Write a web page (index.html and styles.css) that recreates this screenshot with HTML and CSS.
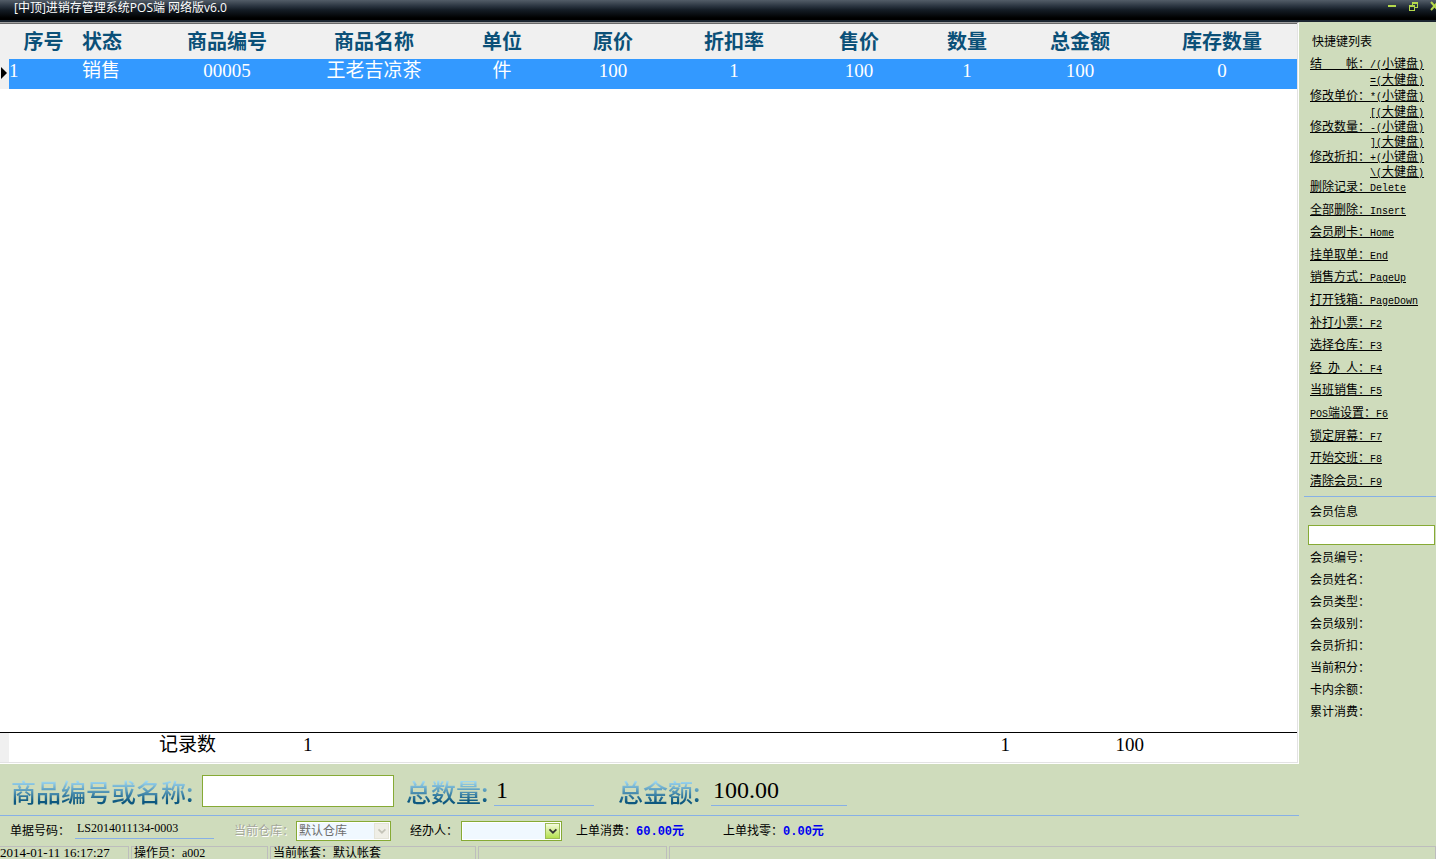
FILE: index.html
```html
<!DOCTYPE html>
<html lang="zh-CN">
<head>
    <meta charset="UTF-8">
    <meta name="viewport" content="width=device-width, initial-scale=1.0">
    <title>进销存管理系统POS端</title>
    <link rel="stylesheet" href="styles.css">
</head>
<body>
    <!-- 标题栏 -->
    <header class="titlebar">
        <h1>[中顶]进销存管理系统POS端 网络版v6.0</h1>
        <div class="win-buttons">
            <button type="button" aria-label="最小化">
                <svg width="10" height="12" viewBox="0 0 10 12"><path d="M0 5h8v2H0z" fill="#b5d94c"/></svg>
            </button>
            <button type="button" aria-label="还原">
                <svg width="10" height="12" viewBox="0 0 10 12" fill="#b5d94c" shape-rendering="crispEdges"><path d="M3 2h6v6H6V7h2V4H4v1H3zM0 5h6v6H0zM1 7v3h4V7z" fill-rule="evenodd"/></svg>
            </button>
            <button type="button" aria-label="关闭">
                <svg width="10" height="12" viewBox="0 0 10 12"><path d="M1 2l7 8M8 2l-7 8" stroke="#b5d94c" stroke-width="2"/></svg>
            </button>
        </div>
    </header>

    <div class="content">
        <main>
            <!-- 销售明细 -->
            <div class="grid">
                <table>
                    <colgroup>
                        <col class="c-mark"><col class="c-no"><col class="c-state"><col class="c-code"><col class="c-name"><col class="c-unit"><col class="c-price"><col class="c-rate"><col class="c-sale"><col class="c-qty"><col class="c-total"><col class="c-stock">
                    </colgroup>
                    <thead>
                        <tr>
                            <th></th>
                            <th>序号</th>
                            <th class="left">状态</th>
                            <th>商品编号</th>
                            <th>商品名称</th>
                            <th>单位</th>
                            <th>原价</th>
                            <th>折扣率</th>
                            <th>售价</th>
                            <th>数量</th>
                            <th>总金额</th>
                            <th>库存数量</th>
                        </tr>
                    </thead>
                    <tbody>
                        <tr class="selected">
                            <td class="mark"><svg width="6" height="12" viewBox="0 0 6 12"><path d="M0 0l6 6-6 6z"/></svg></td>
                            <td class="first">1</td>
                            <td class="left">销售</td>
                            <td>00005</td>
                            <td>王老吉凉茶</td>
                            <td>件</td>
                            <td>100</td>
                            <td>1</td>
                            <td>100</td>
                            <td>1</td>
                            <td>100</td>
                            <td>0</td>
                        </tr>
                        <tr class="filler"><td colspan="12"></td></tr>
                    </tbody>
                    <tfoot>
                        <tr>
                            <td class="mark"></td>
                            <td></td>
                            <td></td>
                            <td class="left">记录数</td>
                            <td class="left">1</td>
                            <td></td>
                            <td></td>
                            <td></td>
                            <td></td>
                            <td class="right">1</td>
                            <td class="right">100</td>
                            <td></td>
                        </tr>
                    </tfoot>
                </table>
            </div>

            <!-- 录入与合计 -->
            <section class="entry">
                <label for="goods" class="big">商品编号或名称:</label>
                <input type="text" id="goods" name="goods">
                <span class="big qty-label">总数量:</span>
                <output class="qty">1</output>
                <span class="big sum-label">总金额:</span>
                <output class="sum">100.00</output>
            </section>

            <section class="bill">
                <span>单据号码：</span>
                <output class="bill-no">LS2014011134-0003</output>
                <label for="store" class="disabled">当前仓库：</label>
                <div class="combo off">
                    <select id="store" name="store" disabled>
                        <option>默认仓库</option>
                    </select>
                    <svg width="15" height="16" viewBox="0 0 15 16"><path d="M4 6l4 4 4-4" fill="none" stroke="#c4c3b8" stroke-width="2"/></svg>
                </div>
                <label for="agent" class="agent">经办人：</label>
                <div class="combo wide">
                    <select id="agent" name="agent">
                        <option></option>
                    </select>
                    <svg width="15" height="16" viewBox="0 0 15 16"><path d="M4 6l4 4 4-4" fill="none" stroke="#333" stroke-width="2"/></svg>
                </div>
                <span class="last-pay">上单消费：<b>60.00元</b></span>
                <span class="last-change">上单找零：<b>0.00元</b></span>
            </section>
        </main>

        <!-- 右侧快捷键与会员 -->
        <aside>
            <h2>快捷键列表</h2>
            <ul class="pairs">
                <li><a href="#">结　　帐：<kbd>/(</kbd>小键盘<kbd>)</kbd></a></li>
                <li class="alt"><a href="#"><kbd>=(</kbd>大健盘<kbd>)</kbd></a></li>
                <li><a href="#">修改单价：<kbd>*(</kbd>小键盘<kbd>)</kbd></a></li>
                <li class="alt"><a href="#"><kbd>[(</kbd>大健盘<kbd>)</kbd></a></li>
            </ul>
            <ul class="pairs tight">
                <li><a href="#">修改数量：<kbd>-(</kbd>小键盘<kbd>)</kbd></a></li>
                <li class="alt"><a href="#"><kbd>](</kbd>大健盘<kbd>)</kbd></a></li>
                <li><a href="#">修改折扣：<kbd>+(</kbd>小键盘<kbd>)</kbd></a></li>
                <li class="alt"><a href="#"><kbd>\(</kbd>大健盘<kbd>)</kbd></a></li>
            </ul>
            <ul class="keys">
                <li><a href="#">删除记录：<kbd>Delete</kbd></a></li>
                <li><a href="#">全部删除：<kbd>Insert</kbd></a></li>
                <li><a href="#">会员刷卡：<kbd>Home</kbd></a></li>
                <li><a href="#">挂单取单：<kbd>End</kbd></a></li>
                <li><a href="#">销售方式：<kbd>PageUp</kbd></a></li>
                <li><a href="#">打开钱箱：<kbd>PageDown</kbd></a></li>
                <li><a href="#">补打小票：<kbd>F2</kbd></a></li>
                <li><a href="#">选择仓库：<kbd>F3</kbd></a></li>
                <li><a href="#">经<kbd>&nbsp;</kbd>办<kbd>&nbsp;</kbd>人：<kbd>F4</kbd></a></li>
                <li><a href="#">当班销售：<kbd>F5</kbd></a></li>
                <li><a href="#"><kbd>POS</kbd>端设置：<kbd>F6</kbd></a></li>
                <li><a href="#">锁定屏幕：<kbd>F7</kbd></a></li>
                <li><a href="#">开始交班：<kbd>F8</kbd></a></li>
                <li><a href="#">清除会员：<kbd>F9</kbd></a></li>
            </ul>
            <section class="member">
                <label for="card">会员信息</label>
                <input type="text" id="card" name="card">
                <ul>
                    <li>会员编号：</li>
                    <li>会员姓名：</li>
                    <li>会员类型：</li>
                    <li>会员级别：</li>
                    <li>会员折扣：</li>
                    <li>当前积分：</li>
                    <li>卡内余额：</li>
                    <li>累计消费：</li>
                </ul>
            </section>
        </aside>
    </div>

    <!-- 状态栏 -->
    <footer class="status">
        <span class="s-time">2014-01-11 16:17:27</span>
        <span class="s-user">操作员：a002</span>
        <span class="s-book">当前帐套：默认帐套</span>
        <span class="s-blank"></span>
        <span class="s-rest"></span>
    </footer>
</body>
</html>
```
FILE: styles.css
```css
* {
    box-sizing: border-box;
}

body {
    margin: 0;
    height: 100vh;
    display: flex;
    flex-direction: column;
    overflow: hidden;
    background-color: #cfdcbc;
    color: #000;
    font-family: "Liberation Serif", "Noto Sans CJK SC", serif;
    font-size: 12px;
    line-height: 16px;
}

h1, h2, ul {
    margin: 0;
    padding: 0;
    font-size: 12px;
    font-weight: normal;
    list-style: none;
}

/* 标题栏 */
.titlebar {
    display: flex;
    justify-content: space-between;
    flex: none;
    height: 22px;
    padding-left: 14px;
    background: linear-gradient(#535d68 0, #2b3541 6px, #141c25 10px, #000 18px, #000 20px, #1b2530 20px);
    color: #fff;
}

.titlebar h1 {
    font-family: "Open Sans", "Noto Sans CJK SC", sans-serif;
}

.win-buttons {
    display: flex;
    gap: 11px;
    margin-right: -4px;
}

.win-buttons button {
    width: 10px;
    height: 12px;
    padding: 0;
    border: none;
    background: none;
}

.win-buttons svg {
    display: block;
}

.content {
    display: flex;
    flex: 1;
    min-height: 0;
}

main {
    display: flex;
    flex-direction: column;
    flex: 1;
    min-width: 0;
}

/* 销售明细 */
.grid {
    flex: 1;
    min-height: 0;
    background-color: #fff;
    border-top: 1px solid #a0a0a0;
    border-right: 1px solid #fff;
    border-bottom: 1px solid #fff;
    box-shadow: inset -1px -1px #e3e3e3, inset 0 1px #696969;
    padding: 1px 1px 1px 0;
}

.grid table {
    width: 100%;
    height: 100%;
    table-layout: fixed;
    border-collapse: collapse;
    font-size: 19px;
    line-height: 24px;
}

.c-mark { width: 9px; }
.c-no { width: 69px; }
.c-state { width: 77px; }
.c-code { width: 144px; }
.c-name { width: 150px; }
.c-unit { width: 106px; }
.c-price { width: 116px; }
.c-rate { width: 126px; }
.c-sale { width: 124px; }
.c-qty { width: 92px; }
.c-total { width: 134px; }
.c-stock { width: 150px; }

.grid th {
    height: 35px;
    padding: 0;
    background-color: #f0f0f0;
    color: #0b5078;
    font-size: 20px;
}

.grid td {
    height: 30px;
    padding: 0;
    text-align: center;
    vertical-align: top;
    white-space: nowrap;
}

.grid .left {
    padding-left: 4px;
    text-align: left;
}

.grid .right {
    padding-right: 3px;
    text-align: right;
}

.grid .first {
    text-align: left;
}

.grid .selected td {
    background-color: #3399ff;
    color: #fff;
}

.grid td.mark,
.grid .selected td.mark {
    background-color: #f0f0f0;
    text-align: left;
}

.mark svg {
    display: block;
    margin: 8px 0 0 1px;
}

.grid .filler td {
    height: auto;
}

.grid tfoot td {
    border-top: 1px solid #000;
}

/* 录入与合计 */
.entry {
    display: flex;
    align-items: center;
    flex: none;
    height: 52px;
    padding: 2px 0 0 11px;
    border-bottom: 1px solid #87b0e6;
    font-size: 24px;
    line-height: 30px;
    white-space: nowrap;
}

.big {
    flex: none;
    font-family: "Noto Sans CJK SC", sans-serif;
    font-size: 25px;
    font-weight: 500;
    background: linear-gradient(#a4dcf5 15%, #0d587f 85%);
    -webkit-background-clip: text;
    background-clip: text;
    color: transparent;
}

.entry label {
    width: 191px;
}

.entry input {
    width: 192px;
    height: 32px;
    border: 1px solid #86aa35;
    background-color: #fff;
    font-size: 20px;
}

.qty-label {
    width: 88px;
    margin-left: 12px;
}

.sum-label {
    width: 93px;
    margin-left: 24px;
}

.entry output {
    padding-left: 2px;
    border-bottom: 1px solid #87b0e6;
}

.qty {
    width: 100px;
}

.sum {
    width: 136px;
}

.bill {
    display: flex;
    align-items: center;
    flex: none;
    height: 30px;
    padding-left: 10px;
    white-space: nowrap;
}

.bill-no {
    align-self: flex-start;
    width: 139px;
    height: 19px;
    margin: 4px 20px 0 5px;
    padding-left: 2px;
    border-bottom: 1px solid #87b0e6;
}

.disabled {
    width: 62px;
    color: #a5a79c;
    text-shadow: 1px 1px #fff;
}

.combo {
    display: flex;
    align-items: center;
    width: 95px;
    height: 20px;
    padding-right: 1px;
    border: 1px solid #86aa35;
    background-color: #f0f8ff;
    box-shadow: inset 0 0 0 1px #fff;
}

.combo select {
    flex: 1;
    min-width: 0;
    padding: 0 2px;
    border: none;
    background: none;
    appearance: none;
    font: inherit;
    color: #000;
}

.combo.off select {
    color: #6d6d6d;
    opacity: 1;
}

.combo svg {
    border: 1px solid #9dbb55;
    background: linear-gradient(#f4fbdc, #b4e04e);
}

.combo.off svg {
    border-color: #e4e3d8;
    background: #efeee6;
}

.agent {
    width: 51px;
    margin-left: 19px;
}

.combo.wide {
    width: 101px;
}

.last-pay {
    width: 133px;
    margin-left: 14px;
}

.last-change {
    margin-left: 14px;
}

.bill b {
    font-family: "Liberation Mono", "Noto Sans CJK SC", monospace;
    color: #0000f0;
}

/* 右侧 */
aside {
    flex: none;
    width: 137px;
    padding: 12px 0 0 11px;
    white-space: nowrap;
}

aside h2 {
    padding-left: 2px;
    margin-bottom: 6px;
}

aside a {
    color: #000;
    text-decoration: underline;
    text-underline-offset: 1px;
}

kbd {
    font-family: "Liberation Mono", monospace;
    font-size: 10px;
}

.pairs li {
    height: 16px;
}

.pairs .alt {
    padding-left: 60px;
}

.pairs.tight li,
.keys li {
    height: 15px;
    line-height: 15px;
}

.keys {
    display: flex;
    flex-direction: column;
    justify-content: space-between;
    height: 309px;
}

.member {
    margin: 7px 0 0 -6px;
    padding: 7px 0 0 6px;
    border-top: 1px solid #87b0e6;
}

.member label {
    display: block;
}

.member input {
    display: block;
    width: 127px;
    height: 20px;
    margin: 5px 0 2px -2px;
    border: 1px solid #86aa35;
    background-color: #fff;
}

.member li {
    height: 22px;
    line-height: 22px;
}

/* 状态栏 */
.status {
    display: flex;
    gap: 2px;
    flex: none;
    height: 13px;
    white-space: nowrap;
}

.status span {
    height: 13px;
    padding-left: 2px;
    border: 1px solid #bdbdbd;
    border-bottom: none;
    line-height: 12px;
}

.status .s-time {
    width: 129px;
    padding-left: 0;
    border-left: none;
    font-size: 13px;
}

.s-user {
    width: 137px;
}

.s-book {
    width: 206px;
}

.s-blank {
    width: 189px;
}

.s-rest {
    flex: 1;
}
```
